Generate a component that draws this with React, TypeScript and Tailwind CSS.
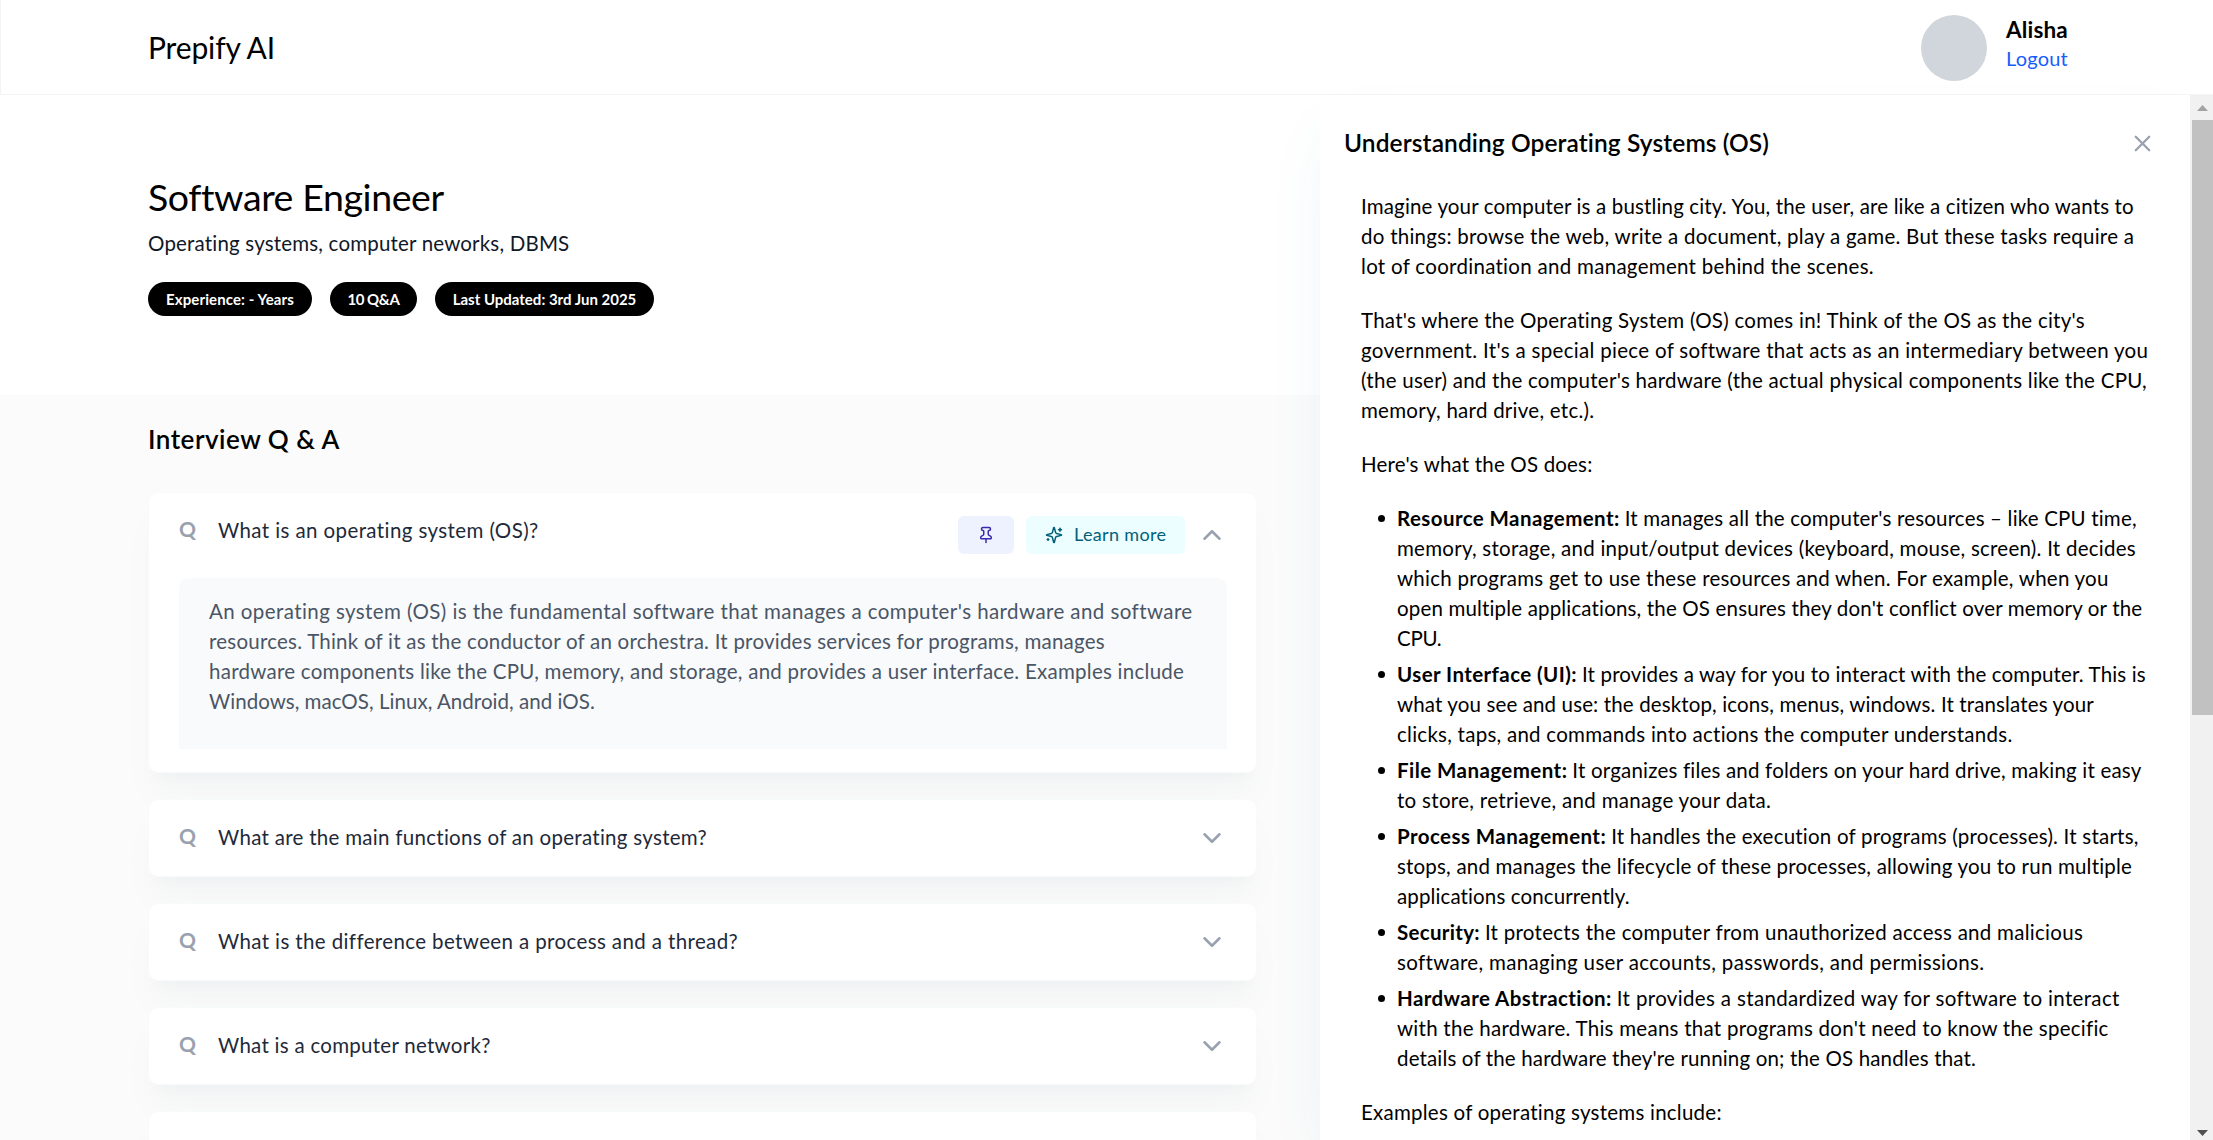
import { ChevronDown, ChevronUp, Pin, X } from "lucide-react";

type Line = { text: string; track: string; bold?: string; boldTrack?: string };

const answer: Line[] = [
  { text: "An operating system (OS) is the fundamental software that manages a computer's hardware and software", track: "tracking-[0.42px]" },
  { text: "resources. Think of it as the conductor of an orchestra. It provides services for programs, manages", track: "tracking-[0.23px]" },
  { text: "hardware components like the CPU, memory, and storage, and provides a user interface. Examples include", track: "tracking-[0.26px]" },
  { text: "Windows, macOS, Linux, Android, and iOS.", track: "tracking-[0.04px]" },
];

const intro: Line[][] = [
  [
    { text: "Imagine your computer is a bustling city. You, the user, are like a citizen who wants to", track: "tracking-[0.15px]" },
    { text: "do things: browse the web, write a document, play a game. But these tasks require a", track: "tracking-[0.26px]" },
    { text: "lot of coordination and management behind the scenes.", track: "tracking-[0.29px]" },
  ],
  [
    { text: "That's where the Operating System (OS) comes in! Think of the OS as the city's", track: "tracking-[0.25px]" },
    { text: "government. It's a special piece of software that acts as an intermediary between you", track: "tracking-[0.31px]" },
    { text: "(the user) and the computer's hardware (the actual physical components like the CPU,", track: "tracking-[0.26px]" },
    { text: "memory, hard drive, etc.).", track: "tracking-[0.26px]" },
  ],
  [{ text: "Here's what the OS does:", track: "tracking-[0.18px]" }],
];

const bullets: Line[][] = [
  [
    { bold: "Resource Management:", boldTrack: "tracking-[0.42px]", text: "It manages all the computer's resources – like CPU time,", track: "tracking-[0.18px]" },
    { text: "memory, storage, and input/output devices (keyboard, mouse, screen). It decides", track: "tracking-[0.25px]" },
    { text: "which programs get to use these resources and when. For example, when you", track: "tracking-[0.25px]" },
    { text: "open multiple applications, the OS ensures they don't conflict over memory or the", track: "tracking-[0.16px]" },
    { text: "CPU.", track: "tracking-[-0.3px]" },
  ],
  [
    { bold: "User Interface (UI):", boldTrack: "tracking-[0.42px]", text: "It provides a way for you to interact with the computer. This is", track: "tracking-[0.15px]" },
    { text: "what you see and use: the desktop, icons, menus, windows. It translates your", track: "tracking-[0.13px]" },
    { text: "clicks, taps, and commands into actions the computer understands.", track: "tracking-[0.26px]" },
  ],
  [
    { bold: "File Management:", boldTrack: "tracking-[0.44px]", text: "It organizes files and folders on your hard drive, making it easy", track: "tracking-[0.19px]" },
    { text: "to store, retrieve, and manage your data.", track: "tracking-[0.31px]" },
  ],
  [
    { bold: "Process Management:", boldTrack: "tracking-[0.44px]", text: "It handles the execution of programs (processes). It starts,", track: "tracking-[0.22px]" },
    { text: "stops, and manages the lifecycle of these processes, allowing you to run multiple", track: "tracking-[0.19px]" },
    { text: "applications concurrently.", track: "tracking-[0.12px]" },
  ],
  [
    { bold: "Security:", boldTrack: "tracking-[0.3px]", text: "It protects the computer from unauthorized access and malicious", track: "tracking-[0.28px]" },
    { text: "software, managing user accounts, passwords, and permissions.", track: "tracking-[0.33px]" },
  ],
  [
    { bold: "Hardware Abstraction:", boldTrack: "tracking-[0.42px]", text: "It provides a standardized way for software to interact", track: "tracking-[0.35px]" },
    { text: "with the hardware. This means that programs don't need to know the specific", track: "tracking-[0.26px]" },
    { text: "details of the hardware they're running on; the OS handles that.", track: "tracking-[0.15px]" },
  ],
];

const questions: Line[] = [
  { text: "What are the main functions of an operating system?", track: "tracking-[0.29px]" },
  { text: "What is the difference between a process and a thread?", track: "tracking-[0.38px]" },
  { text: "What is a computer network?", track: "tracking-[0.27px]" },
];

const cardClass =
  "rounded-[10px] border border-gray-50 bg-white pl-[30px] shadow-[0_25px_31px_-6px_rgba(107,114,138,0.05),0_10px_12px_-7px_rgba(107,114,138,0.03)]";

function Lines({ lines }: { lines: Line[] }) {
  return (
    <>
      {lines.map((l) => (
        <div key={l.text} className="h-[30px] whitespace-nowrap">
          {l.bold && <strong className={`mr-[5px] font-bold ${l.boldTrack}`}>{l.bold}</strong>}
          <span className={l.track}>{l.text}</span>
        </div>
      ))}
    </>
  );
}

function Question({ line }: { line: Line }) {
  return (
    <div className="flex pt-[22px] leading-[30px]">
      <span className="w-[39px] text-[21px] leading-[27px] font-bold text-gray-400">Q</span>
      <h3 className={`text-[20.5px] whitespace-nowrap text-gray-800 ${line.track}`}>{line.text}</h3>
    </div>
  );
}

function SparklesIcon() {
  return (
    <svg
      viewBox="0 0 24 24"
      className="size-[18px] fill-none stroke-current stroke-2"
      strokeLinecap="round"
      strokeLinejoin="round"
    >
      <path d="M9.937 15.5A2 2 0 0 0 8.5 14.063l-6.135-1.582a.5.5 0 0 1 0-.962L8.5 9.936A2 2 0 0 0 9.937 8.5l1.582-6.135a.5.5 0 0 1 .963 0L14.063 8.5A2 2 0 0 0 15.5 9.937l6.135 1.581a.5.5 0 0 1 0 .964L15.5 14.063a2 2 0 0 0-1.437 1.437l-1.582 6.135a.5.5 0 0 1-.963 0z" />
      <path d="M20 3v4" />
      <path d="M22 5h-4" />
      <path d="M4 17v2" />
      <path d="M5 18H3" />
    </svg>
  );
}

function Pill({ children, className }: { children: string; className: string }) {
  return (
    <div className={`flex h-[34px] items-center justify-center rounded-full bg-black text-[15px] font-bold whitespace-nowrap text-white ${className}`}>
      {children}
    </div>
  );
}

export default function App() {
  return (
    <div className="flex h-[1140px] w-[2213px] flex-col overflow-hidden bg-[#fbfbfb] font-['Lato',sans-serif] text-black">
      <header className="flex h-[95px] shrink-0 items-center justify-between border-b border-l border-gray-100 bg-white pr-[145px] pl-[147px]">
        <h2 className="text-[30px] leading-9 tracking-[-0.15px]">Prepify AI</h2>
        <div className="flex items-center gap-[19px] pt-[2px]">
          <div className="size-[66px] rounded-full bg-gray-300" />
          <div className="pb-2">
            <div className="text-[22.5px] leading-7 font-bold tracking-[0.15px]">Alisha</div>
            <div className="text-[20px] leading-[28px] tracking-[0.2px] text-blue-600">Logout</div>
          </div>
        </div>
      </header>

      <div className="flex min-h-0 flex-1">
        <main className="w-[1320px] shrink-0">
          <section className="h-[300px] bg-white pt-[79px] pl-[148px]">
            <h1 className="text-[37.5px] leading-[45px] tracking-[-0.4px]">Software Engineer</h1>
            <p className="mt-[9px] text-[20.5px] leading-[30px] tracking-[0.18px] text-gray-900">
              Operating systems, computer neworks, DBMS
            </p>
            <div className="mt-6 flex gap-[18px]">
              <Pill className="w-[164px] tracking-[0.1px]">Experience: - Years</Pill>
              <Pill className="w-[87px] tracking-[-0.5px]">10 Q&A</Pill>
              <Pill className="w-[219px]">Last Updated: 3rd Jun 2025</Pill>
            </div>
          </section>

          <section className="pt-[29px] pr-[63px] pl-[148px]">
            <h2 className="text-[26px] leading-[31px] font-semibold tracking-[0.5px]">Interview Q & A</h2>
            <div className="mt-[37px] flex flex-col gap-[26px]">
              <div className={`h-[281px] pr-[29px] ${cardClass}`}>
                <div className="flex justify-between">
                  <Question line={{ text: "What is an operating system (OS)?", track: "tracking-[0.4px]" }} />
                  <div className="flex items-center gap-3 pt-[23px]">
                    <button className="flex h-[38px] w-14 items-center justify-center rounded-md bg-indigo-50 text-indigo-800">
                      <Pin size={18} />
                    </button>
                    <button className="flex h-[38px] w-[159px] items-center rounded-md bg-cyan-50 pl-[19px] text-[18px] whitespace-nowrap text-cyan-800">
                      <SparklesIcon />
                      <span className="ml-[11px] pb-px tracking-[0.35px]">Learn more</span>
                    </button>
                    <ChevronUp size={30} className="text-gray-400" />
                  </div>
                </div>
                <div className="mt-6 h-[171px] rounded-t-[10px] bg-gray-50 pt-[18px] pl-[30px] text-[20.5px] leading-[30px] text-gray-600">
                  <Lines lines={answer} />
                </div>
              </div>
              {questions.map((q) => (
                <div key={q.text} className={`flex h-[78px] justify-between pr-[29px] ${cardClass}`}>
                  <Question line={q} />
                  <ChevronDown size={30} className="self-center text-gray-400" />
                </div>
              ))}
              <div className={`h-[78px] ${cardClass}`} />
            </div>
          </section>
        </main>

        <aside className="relative h-[1045px] w-[870px] shrink-0 bg-white shadow-[0_31px_62px_-15px_rgba(20,140,170,0.1)]">
          <div className="flex h-[95px] items-center justify-between pt-px pr-[34px] pl-6">
            <h2 className="text-[24.5px] leading-[30px] font-semibold tracking-[0.1px]">Understanding Operating Systems (OS)</h2>
            <X size={27} className="text-gray-400" />
          </div>
          <div className="flex flex-col gap-6 pt-px pl-[41px] text-[20.5px] leading-[30px]">
            {intro.map((p) => (
              <div key={p[0].text}>
                <Lines lines={p} />
              </div>
            ))}
            <ul className="flex flex-col gap-1.5">
              {bullets.map((b) => (
                <li key={b[0].text} className="flex pl-[17px]">
                  <span className="mt-3 mr-[12px] size-[7px] shrink-0 rounded-full bg-black" />
                  <div>
                    <Lines lines={b} />
                  </div>
                </li>
              ))}
            </ul>
            <div className="tracking-[0.24px]">Examples of operating systems include:</div>
          </div>
        </aside>

        <div className="relative flex w-[23px] shrink-0 flex-col items-center bg-[#f1f1f1] pl-[2px]">
          <svg viewBox="0 0 11 6" className="mt-[10px] h-[6px] w-[11px] shrink-0 fill-[#a3a3a3]">
            <path d="M0 6 5.5 0 11 6z" />
          </svg>
          <div className="mt-[9px] h-[595px] w-full bg-[#c1c1c1]" />
          <svg viewBox="0 0 11 6" className="mt-auto mb-1 h-[6px] w-[11px] shrink-0 fill-[#505050]">
            <path d="M0 0 5.5 6 11 0z" />
          </svg>
        </div>
      </div>
    </div>
  );
}
